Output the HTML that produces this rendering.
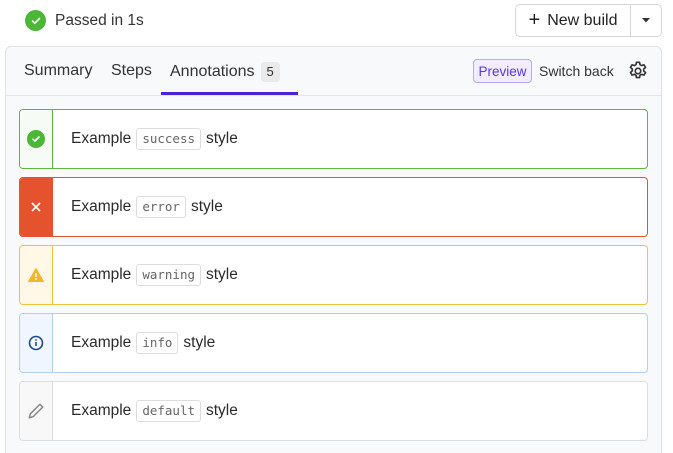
<!DOCTYPE html>
<html><head><style>
*{box-sizing:border-box;margin:0;padding:0}
html,body{width:673px;height:453px;overflow:hidden}
body{background:#fff;font-family:"Liberation Sans",Helvetica,Arial,sans-serif;color:#222;position:relative}
.status{position:absolute;left:25px;top:10px;display:flex;align-items:center;font-size:15.5px;color:#333}
.status .ic{width:21px;height:21px;border-radius:50%;background:#4cb637;margin-right:9px;display:flex;align-items:center;justify-content:center}
.btn{position:absolute;left:515px;top:4px;width:147px;height:33px;border:1px solid #d6d6d6;border-radius:5px;display:flex;font-size:16px;color:#222}
.btn .m{width:115px;border-right:1px solid #d6d6d6;display:flex;align-items:center;justify-content:center}
.btn .d{flex:1;display:flex;align-items:center;justify-content:center}
.panel{position:absolute;left:5px;top:46px;width:657px;height:407px;border:1px solid #e2e2e2;border-bottom:none;border-radius:6px 6px 0 0;background:#f8f9fb}
.tabs{height:49px;border-bottom:1px solid #e4e4e6;position:relative;font-size:16px}
.tab{position:absolute;top:15px;color:#333;line-height:18px}
.badge{display:inline-block;background:#eaeaea;border-radius:4px;padding:2px 6px;font-size:13px;line-height:16px;margin-left:6px;color:#333;vertical-align:middle}
.ul{position:absolute;left:155px;top:45px;width:137px;height:3px;background:#4a23d8}
.prev{position:absolute;left:467px;top:12px;width:59px;height:24px;border:1px solid #b9a8f3;background:#f1edff;border-radius:4px;color:#5a35dd;font-size:13.5px;display:flex;align-items:center;justify-content:center}
.sb{position:absolute;left:533px;top:16px;font-size:14px;color:#333}
.gear{position:absolute;left:621px;top:13px}
.card{position:absolute;left:13px;width:629px;height:60px;border:1px solid;border-radius:4px;background:#fff;display:flex;align-items:center;overflow:hidden}
.card .s{width:33px;height:100%;border-right:1px solid;display:flex;align-items:center;justify-content:center;flex:none}
.card .t{margin-left:18px;font-size:15.5px;color:#2a2a2a;display:flex;align-items:center}
code{font-family:"DejaVu Sans Mono","Liberation Mono",monospace;font-size:12.5px;line-height:16px;color:#666;border:1px solid #ddd;border-radius:3px;padding:2px 5px;margin:0 5px;background:#fff}
</style></head><body>
<div class="status"><div class="ic"><svg width="10" height="8" viewBox="0 0 10 8"><path d="M1.5 4l2.3 2.2L8.5 1.5" stroke="#fff" stroke-width="1.6" fill="none" stroke-linecap="round"/></svg></div>Passed in 1s</div>
<div class="btn"><div class="m"><span style="font-size:20px;margin-right:7px;font-weight:300">+</span>New build</div><div class="d"><svg width="8" height="5"><path d="M0 0h8L4 4.5z" fill="#333"/></svg></div></div>
<div class="panel">
 <div class="tabs">
  <span class="tab" style="left:18px">Summary</span>
  <span class="tab" style="left:105px">Steps</span>
  <span class="tab" style="left:164px">Annotations<span class="badge">5</span></span>
  <div class="ul"></div>
  <div class="prev">Preview</div>
  <span class="sb">Switch back</span>
  <svg class="gear" width="22" height="22" viewBox="0 0 24 24" fill="none" stroke="#333" stroke-width="1.8"><circle cx="12" cy="12" r="3"/><path d="M10.3 2.5h3.4l.5 2.6 1.8 1 2.5-.9 1.7 2.9-2 1.7v2.1l2 1.7-1.7 2.9-2.5-.9-1.8 1-.5 2.6h-3.4l-.5-2.6-1.8-1-2.5.9-1.7-2.9 2-1.7v-2.1l-2-1.7 1.7-2.9 2.5.9 1.8-1z" stroke-linejoin="round"/></svg>
 </div>
 <div class="card" style="top:62px;border-color:#5cb83e"><div class="s" style="border-color:#5cb83e;background:#f7fbf5"><svg width="18" height="18"><circle cx="9" cy="9" r="9" fill="#4cb637"/><path d="M6 9.2l2 1.8 4-4" stroke="#fff" stroke-width="1.6" fill="none" stroke-linecap="round"/></svg></div><div class="t">Example<code>success</code>style</div></div>
 <div class="card" style="top:130px;border-color:#e5522e"><div class="s" style="border-color:#e5522e;background:#e5522e"><svg width="10" height="10"><path d="M1 1l8 8M9 1l-8 8" stroke="#fff" stroke-width="1.6"/></svg></div><div class="t">Example<code>error</code>style</div></div>
 <div class="card" style="top:198px;border-color:#f3c23b"><div class="s" style="border-color:#f3c23b;background:#fff8e6"><svg width="16" height="14" viewBox="0 0 16 14"><path d="M8 .5L15.5 13.5H.5z" fill="#f3b52b" stroke="#f3b52b" stroke-linejoin="round"/><path d="M8 5v4" stroke="#fff" stroke-width="1.6"/><circle cx="8" cy="11" r=".9" fill="#fff"/></svg></div><div class="t">Example<code>warning</code>style</div></div>
 <div class="card" style="top:266px;border-color:#b3cdf5"><div class="s" style="border-color:#b3cdf5;background:#f0f6ff"><svg width="16" height="16"><circle cx="8" cy="8" r="6.5" fill="none" stroke="#1e4a8c" stroke-width="1.6"/><path d="M8 7v4" stroke="#1e4a8c" stroke-width="1.6"/><circle cx="8" cy="5" r=".9" fill="#1e4a8c"/></svg></div><div class="t">Example<code>info</code>style</div></div>
 <div class="card" style="top:334px;border-color:#dedede"><div class="s" style="border-color:#dedede;background:#f8f8f8"><svg width="18" height="18" viewBox="0 0 16 16"><path d="M2 14l1-3.5L11.5 2l2.5 2.5L5.5 13z" fill="none" stroke="#888" stroke-width="1.3" stroke-linejoin="round"/></svg></div><div class="t">Example<code>default</code>style</div></div>
</div>
</body></html>
